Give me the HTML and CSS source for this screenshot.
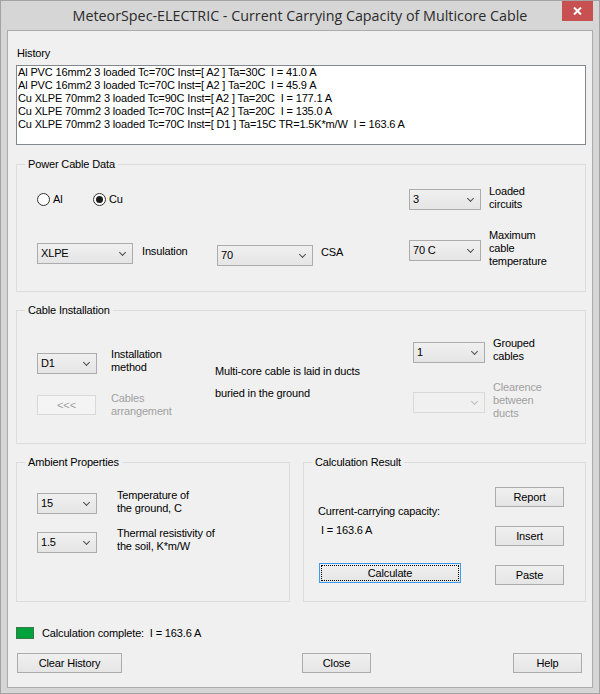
FILE: index.html
```html
<!DOCTYPE html>
<html lang="en">
<head>
    <meta charset="UTF-8">
    <title>MeteorSpec-ELECTRIC - Current Carrying Capacity of Multicore Cable</title>
    <link rel="stylesheet" href="styles.css">
</head>
<body>
    <div class="window">
        <div class="titlebar">
            <span class="title">MeteorSpec-ELECTRIC - Current Carrying Capacity of Multicore Cable</span>
            <button class="close-btn" title="Close">
                <svg width="9" height="8" viewBox="0 0 9 8"><path d="M1 0.5 L8 7.5 M8 0.5 L1 7.5" stroke="#fff" stroke-width="2"/></svg>
            </button>
        </div>

        <div class="client">
            <div class="history-label">History</div>
            <div class="listbox">
                <div class="history-row">Al PVC 16mm2 3 loaded Tc=70C Inst=[ A2 ] Ta=30C  I = 41.0 A</div>
                <div class="history-row">Al PVC 16mm2 3 loaded Tc=70C Inst=[ A2 ] Ta=20C  I = 45.9 A</div>
                <div class="history-row">Cu XLPE 70mm2 3 loaded Tc=90C Inst=[ A2 ] Ta=20C  I = 177.1 A</div>
                <div class="history-row">Cu XLPE 70mm2 3 loaded Tc=70C Inst=[ A2 ] Ta=20C  I = 135.0 A</div>
                <div class="history-row">Cu XLPE 70mm2 3 loaded Tc=70C Inst=[ D1 ] Ta=15C TR=1.5K*m/W  I = 163.6 A</div>
            </div>

            <div class="group power">
                <div class="group-title">Power Cable Data</div>
                <div class="power-grid">
                    <div class="radios">
                        <label class="radio"><span class="radio-circle"></span>Al</label>
                        <label class="radio"><span class="radio-circle checked"></span>Cu</label>
                    </div>
                    <div class="combo combo-md mt4"><span>3</span></div>
                    <div class="label">Loaded<br>circuits</div>

                    <div class="combo combo-lg mt14"><span>XLPE</span></div>
                    <div class="label mt16">Insulation</div>
                    <div class="combo combo-lg mt16"><span>70</span></div>
                    <div class="label mt17">CSA</div>
                    <div class="combo combo-md mt11"><span>70 C</span></div>
                    <div class="label">Maximum<br>cable<br>temperature</div>
                </div>
            </div>

            <div class="group install">
                <div class="group-title">Cable Installation</div>
                <div class="install-grid">
                    <div class="combo combo-sm mt16"><span>D1</span></div>
                    <div class="label mt11">Installation<br>method</div>
                    <div class="label mt28">Multi-core cable is laid in ducts</div>
                    <div class="combo combo-md mt5"><span>1</span></div>
                    <div class="label">Grouped<br>cables</div>

                    <button class="btn btn-arrange mt14" disabled>&lt;&lt;&lt;</button>
                    <div class="label disabled mt11">Cables<br>arrangement</div>
                    <div class="label mt6">buried in the ground</div>
                    <div class="combo combo-md disabled mt11"><span></span></div>
                    <div class="label disabled">Clearence<br>between<br>ducts</div>
                </div>
            </div>

            <div class="bottom-groups">
                <div class="group ambient">
                    <div class="group-title">Ambient Properties</div>
                    <div class="ambient-grid">
                        <div class="combo combo-sm mt4"><span>15</span></div>
                        <div class="label">Temperature of<br>the ground, C</div>
                        <div class="combo combo-sm mt5"><span>1.5</span></div>
                        <div class="label">Thermal resistivity of<br>the soil, K*m/W</div>
                    </div>
                </div>

                <div class="group result">
                    <div class="group-title">Calculation Result</div>
                    <div class="result-grid">
                        <div class="result-left">
                            <div class="label capacity-title">Current-carrying capacity:</div>
                            <div class="label capacity-value">I = 163.6 A</div>
                            <button class="btn btn-calc btn-focus">Calculate</button>
                        </div>
                        <div class="result-right">
                            <button class="btn btn-side">Report</button>
                            <button class="btn btn-side">Insert</button>
                            <button class="btn btn-side">Paste</button>
                        </div>
                    </div>
                </div>
            </div>

            <div class="status">
                <span class="led"></span>
                <span class="status-text">Calculation complete:  I = 163.6 A</span>
            </div>

            <div class="footer">
                <button class="btn btn-clear">Clear History</button>
                <button class="btn btn-close">Close</button>
                <button class="btn btn-help">Help</button>
            </div>
        </div>
    </div>
</body>
</html>
```

FILE: styles.css
```css
*, *::before, *::after {
    box-sizing: border-box;
}
body {
    margin: 0;
    font-family: "Liberation Sans", Arial, sans-serif;
    font-size: 11px;
    line-height: 13px;
    letter-spacing: -0.15px;
    color: #000;
    background-color: #d6d6d6;
}

/* window frame */
.window {
    width: 600px;
    height: 694px;
    border: 1px solid #a3a3a3;
    padding: 0 6px 5px 6px;
    background-color: #d6d6d6;
}
.titlebar {
    position: relative;
    height: 29px;
    line-height: 29px;
    text-align: center;
}
.title {
    font-family: "Open Sans", "Noto Sans", sans-serif;
    font-size: 14.3px;
    letter-spacing: 0;
    color: #2b2b2b;
}
.close-btn {
    position: absolute;
    top: 0;
    right: 0;
    width: 31px;
    height: 20px;
    padding: 0;
    border: none;
    background-color: #c75050;
    display: flex;
    align-items: center;
    justify-content: center;
}
.client {
    height: 658px;
    border: 1px solid #ababab;
    background-color: #f0f0f0;
    padding-left: 8px;
}

/* history */
.history-label {
    margin: 16px 0 0 1px;
}
.listbox {
    width: 570px;
    height: 80px;
    margin-top: 5px;
    padding: 0 1px;
    border: 1px solid #828790;
    background-color: #fff;
}
.history-row {
    white-space: pre;
}

/* group boxes */
.group {
    border: 1px solid #dcdcdc;
}
.group-title {
    width: max-content;
    margin: -8px 0 0 8px;
    padding: 0 3px;
    line-height: 14px;
    background-color: #f0f0f0;
}
.power {
    width: 570px;
    height: 128px;
    margin-top: 19px;
}
.install {
    width: 570px;
    height: 134px;
    margin-top: 18px;
}
.bottom-groups {
    display: flex;
    gap: 13px;
    margin-top: 18px;
}
.ambient {
    width: 274px;
    height: 140px;
}
.result {
    width: 283px;
    height: 140px;
}

.power-grid {
    display: grid;
    grid-template-columns: 105px 75px 104px 88px 80px auto;
    grid-template-rows: 44px auto;
    align-items: start;
    padding: 14px 0 0 20px;
}
.install-grid {
    display: grid;
    grid-template-columns: 74px 104px 198px 80px auto;
    grid-template-rows: 44px 40px;
    align-items: start;
    padding: 20px 0 0 20px;
}
.ambient-grid {
    display: grid;
    grid-template-columns: 80px auto;
    grid-template-rows: 38px auto;
    align-items: start;
    padding: 20px 0 0 20px;
}
.result-grid {
    display: grid;
    grid-template-columns: 177px 69px;
    padding-left: 14px;
}
.result-left,
.result-right {
    display: flex;
    flex-direction: column;
    align-items: flex-start;
}
.capacity-title {
    margin-top: 36px;
}
.capacity-value {
    margin: 6px 0 0 3px;
}
.btn-calc {
    width: 142px;
    margin: 26px 0 0 1px;
}
.btn-side {
    width: 69px;
    margin-top: 19px;
}
.btn-side:first-child {
    margin-top: 18px;
}

.mt4 { margin-top: 4px; }
.mt5 { margin-top: 5px; }
.mt6 { margin-top: 6px; }
.mt11 { margin-top: 11px; }
.mt14 { margin-top: 14px; }
.mt16 { margin-top: 16px; }
.mt17 { margin-top: 17px; }
.mt28 { margin-top: 28px; }

.label {
    white-space: nowrap;
}
.label.disabled {
    color: #a0a0a0;
}

/* radio buttons */
.radios {
    grid-column: 1 / 5;
    display: flex;
    margin-top: 8px;
}
.radio {
    display: flex;
    align-items: center;
    gap: 3px;
    width: 56px;
}
.radio-circle {
    display: flex;
    align-items: center;
    justify-content: center;
    width: 13px;
    height: 13px;
    border: 1px solid #333;
    border-radius: 50%;
    background-color: #fff;
}
.radio-circle.checked::after {
    content: "";
    width: 7px;
    height: 7px;
    border-radius: 50%;
    background-color: #1c1c1c;
}

/* combo boxes (drop down lists) */
.combo {
    display: flex;
    align-items: center;
    justify-content: space-between;
    height: 21px;
    padding: 0 7px 0 3px;
    border: 1px solid #acacac;
    background: linear-gradient(#f0f0f0, #e5e5e5);
}
.combo::after {
    content: "";
    box-sizing: content-box;
    width: 4px;
    height: 4px;
    margin-top: -3px;
    border-right: 1.5px solid #4d4d4d;
    border-bottom: 1.5px solid #4d4d4d;
    transform: rotate(45deg);
}
.combo.disabled {
    border-color: #d9d9d9;
    background: #f0f0f0;
}
.combo.disabled::after {
    border-color: #bcbcbc;
}
.combo-lg { width: 96px; }
.combo-md { width: 72px; }
.combo-sm { width: 60px; }

/* buttons */
.btn {
    height: 20px;
    padding: 0;
    border: 1px solid #acacac;
    background: linear-gradient(#f0f0f0, #e5e5e5);
    font: inherit;
    letter-spacing: inherit;
    color: #000;
}
.btn:disabled {
    border-color: #d9d9d9;
    background: #f4f4f4;
    color: #a0a0a0;
}
.btn-focus {
    border-color: #3c9bf0;
    outline: 1px dotted #000;
    outline-offset: -3px;
}
.btn-arrange {
    width: 59px;
}

/* status and footer */
.status {
    display: flex;
    gap: 8px;
    margin-top: 25px;
}
.status-text {
    white-space: pre;
}
.led {
    width: 18px;
    height: 12px;
    border: 1px solid #3b7a48;
    background-color: #00a23b;
}
.footer {
    display: flex;
    margin: 13px 0 0 1px;
}
.btn-clear {
    width: 105px;
}
.btn-close {
    width: 69px;
    margin-left: 180px;
}
.btn-help {
    width: 69px;
    margin-left: 142px;
}
```
